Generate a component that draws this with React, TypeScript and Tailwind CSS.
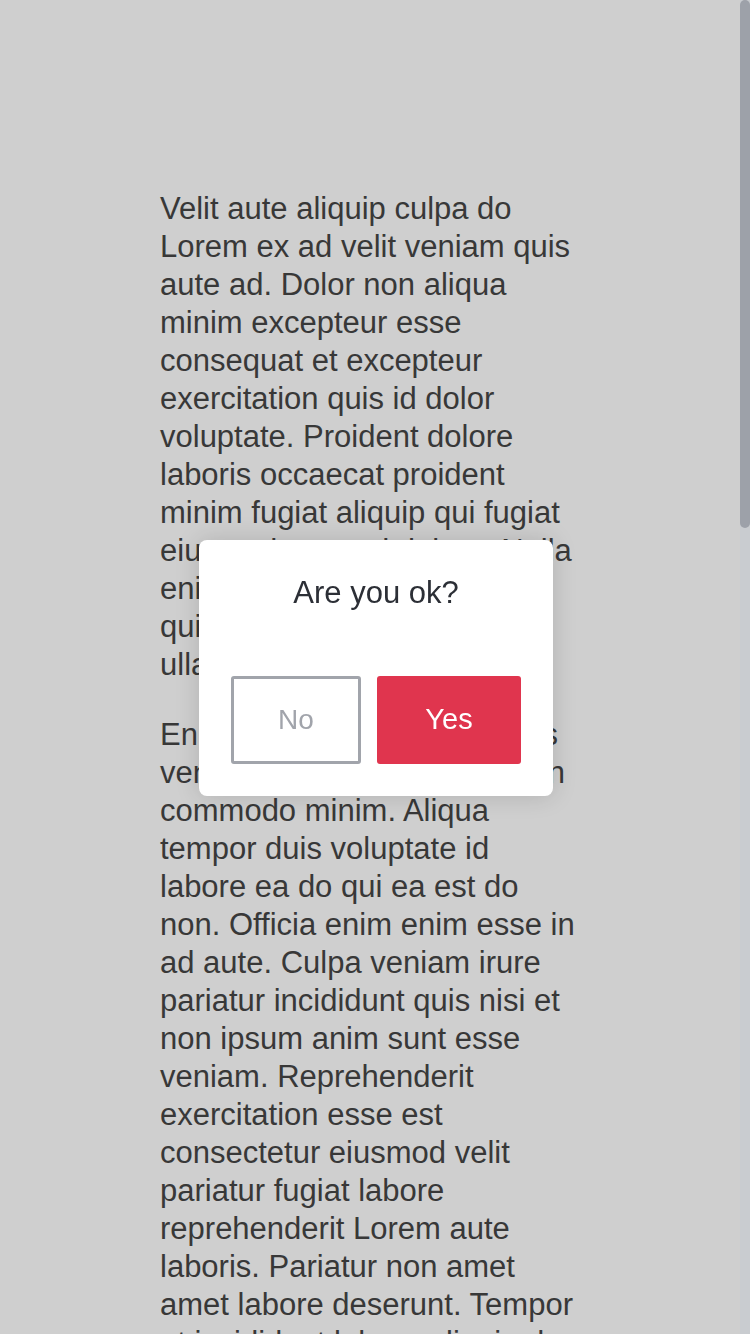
import React from "react";

const paragraphs = [
  "Velit aute aliquip culpa do Lorem ex ad velit veniam quis aute ad. Dolor non aliqua minim excepteur esse consequat et excepteur exercitation quis id dolor voluptate. Proident dolore laboris occaecat proident minim fugiat aliquip qui fugiat eiusmod nostrud dolore. Nulla enim ipsum sint excepteur quis reprehenderit magna ullamco labore.",
  "Enim sunt nostrud culpa quis veniam culpa velit eiusmod in commodo minim. Aliqua tempor duis voluptate id labore ea do qui ea est do non. Officia enim enim esse in ad aute. Culpa veniam irure pariatur incididunt quis nisi et non ipsum anim sunt esse veniam. Reprehenderit exercitation esse est consectetur eiusmod velit pariatur fugiat labore reprehenderit Lorem aute laboris. Pariatur non amet amet labore deserunt. Tempor et incididunt labore aliquip do sint nulla.",
];

function ConfirmModal() {
  return (
    <div className="fixed inset-0 flex items-center justify-center pt-[2px] pl-[2px]">
      <div className="w-[354px] rounded-[8px] bg-white px-8 pt-8 pb-8 shadow-[0_0_24px_rgba(0,0,0,0.15)]">
        <h2 className="mb-[62px] text-center text-[31px] leading-[42px] text-[#2c2f36]">Are you ok?</h2>
        <div className="flex gap-4">
          <button className="h-[88px] w-[130px] rounded-[3px] border-[3px] border-[#a1a4ab] bg-white text-[28px] text-[#a1a4ab]">
            No
          </button>
          <button className="h-[88px] w-[144px] rounded-[3px] bg-[#e0354e] text-[29px] text-white">
            Yes
          </button>
        </div>
      </div>
    </div>
  );
}

export default function App() {
  return (
    <div className="flex h-[1334px] w-[750px] overflow-hidden bg-[#cfcfcf] font-['Liberation_Sans',Arial,sans-serif]">
      <main className="flex w-[740px] justify-center pt-[190px]">
        <div className="w-[420px] text-[31px] leading-[38px] text-[#383838]">
          {paragraphs.map((p, i) => (
            <p key={i} className="mb-8">
              {p}
            </p>
          ))}
        </div>
      </main>
      <div className="w-[10px] bg-[#c9ccd0]">
        <div className="h-[528px] rounded-full bg-[#9da1a9]" />
      </div>
      <ConfirmModal />
    </div>
  );
}
